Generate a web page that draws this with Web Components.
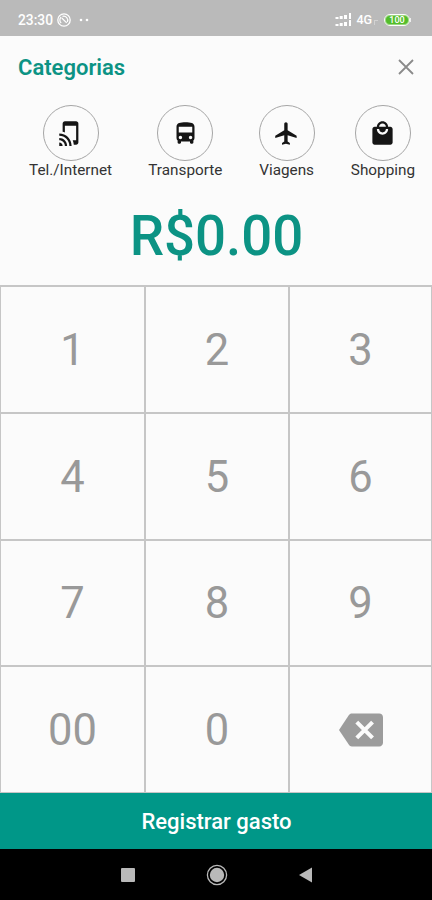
<!DOCTYPE html>
<html lang="pt-BR">
<head>
<meta charset="UTF-8">
<meta name="viewport" content="width=device-width, initial-scale=1.0">
<title>Registrar gasto</title>
<style>
    html, body {
        margin: 0;
        height: 100%;
        background: #fbfbfb;
        font-family: Roboto, "Liberation Sans", sans-serif;
    }
</style>
</head>
<body>
<expense-app></expense-app>

<script>
class BaseElement extends HTMLElement {
    constructor() {
        super();
        const template = document.createElement('template');
        template.innerHTML = this.render();
        this.attachShadow({ mode: 'open' }).appendChild(template.content.cloneNode(true));
    }
}

class StatusBar extends BaseElement {
    render() {
        return `
            <style>
                :host {
                    display: flex;
                    align-items: center;
                    height: 36px;
                    box-sizing: border-box;
                    padding: 3px 21px 0 18px;
                    background: #bababa;
                    color: #fff;
                    font-size: 13.8px;
                    font-weight: 500;
                }
                .clock { width: 36px; }
                .sync { margin-left: 3px; }
                .dots { margin-left: 7px; }
                .signal { margin-left: auto; }
                .net { margin-left: 4px; font-size: 12.5px; }
                .sub { margin: 5px 6px 0 2px; width: 3px; height: 4px; border-left: 1px solid #d2d2d2; border-top: 1px solid #d2d2d2; }
                .battery {
                    box-sizing: border-box;
                    width: 26px;
                    height: 12px;
                    border: 1px solid #fff;
                    border-radius: 6px;
                    background: #53bd2b;
                    box-shadow: inset 0 0 0 1px #9bd781;
                    font-size: 9px;
                    line-height: 10px;
                    text-align: center;
                }
                .tip { width: 1px; height: 4px; background: #eee; }
            </style>
            <span class="clock">23:30</span>
            <svg class="sync" width="14" height="14" viewBox="0 0 14 14" fill="none" stroke="#fff">
                <circle cx="7" cy="7" r="6.2" stroke-width="1.3"/>
                <path d="M4.2 10a4 4 0 0 1 0-6M5.5 3.4a4 4 0 0 1 4.8 5.6M4.8 5l4.9 4.9" stroke-width="1.2"/>
            </svg>
            <svg class="dots" width="12" height="4" viewBox="0 0 12 4" fill="#fff">
                <circle cx="3" cy="2" r="1.3"/><circle cx="9" cy="2" r="1.3"/>
            </svg>
            <svg class="signal" width="17" height="14" viewBox="0 0 17 14" fill="#fff">
                <path d="M0.5 4h3v2h-3zM4.7 3h3v3h-3zM9 2h3v4H9zM14 0h2v6h-2zM0.5 11h3v2h-3zM4.7 10h3v3h-3zM9 9h3v4H9zM14 7h2v6h-2z"/>
            </svg>
            <span class="net">4G</span>
            <span class="sub"></span>
            <span class="battery">100</span>
            <span class="tip"></span>
        `;
    }
}

class AppHeader extends BaseElement {
    render() {
        return `
            <style>
                :host {
                    display: flex;
                    align-items: center;
                    justify-content: space-between;
                    height: 64px;
                    padding: 0 18px;
                }
                h1 {
                    margin: 0;
                    color: #0c9384;
                    font-size: 22px;
                    font-weight: 600;
                    line-height: 26px;
                }
                button { display: flex; padding: 0 0 2px; border: none; background: none; }
            </style>
            <h1><slot></slot></h1>
            <button aria-label="Fechar">
                <svg width="16" height="16" viewBox="0 0 16 16" stroke="#8a8a8a" stroke-width="1.8">
                    <path d="M1 1l14 14M15 1L1 15"/>
                </svg>
            </button>
        `;
    }
}

class CategoryItem extends BaseElement {
    static icons = {
        phone: 'M2 16v2c2.76 0 5 2.24 5 5h2c0-3.87-3.13-7-7-7zm0 4v3h3c0-1.66-1.34-3-3-3zm0-8v2c4.97 0 9 4.03 9 9h2c0-6.08-4.92-11-11-11zM17 1.01L7 1c-1.1 0-2 .9-2 2v7.37c.69.16 1.36.37 2 .64V5h10v13h-3.03c.52 1.25.84 2.59.95 4H17c1.1 0 2-.9 2-2V3c0-1.1-.9-1.99-2-1.99z',
        bus: 'M4 16c0 .88.39 1.67 1 2.22V20c0 .55.45 1 1 1h1c.55 0 1-.45 1-1v-1h8v1c0 .55.45 1 1 1h1c.55 0 1-.45 1-1v-1.78c.61-.55 1-1.34 1-2.22V6c0-3.5-3.58-4-8-4s-8 .5-8 4v10zm3.5 1c-.83 0-1.5-.67-1.5-1.5S6.67 14 7.5 14s1.5.67 1.5 1.5S8.33 17 7.5 17zm9 0c-.83 0-1.5-.67-1.5-1.5s.67-1.5 1.5-1.5 1.5.67 1.5 1.5-.67 1.5-1.5 1.5zm1.5-6H6V6h12v5z',
        flight: 'M21 16v-2l-8-5V3.5c0-.83-.67-1.5-1.5-1.5S10 2.67 10 3.5V9l-8 5v2l8-2.5V19l-2 1.5V22l3.5-1 3.5 1v-1.5L13 19v-5.5l8 2.5z',
        mall: 'M19 6h-2c0-2.76-2.24-5-5-5S7 3.24 7 6H5c-1.1 0-1.99.9-1.99 2L3 20c0 1.1.9 2 2 2h14c1.1 0 2-.9 2-2V8c0-1.1-.9-2-2-2zm-7-3c1.66 0 3 1.34 3 3H9c0-1.66 1.34-3 3-3zm0 10c-2.76 0-5-2.24-5-5h2c0 1.66 1.34 3 3 3s3-1.34 3-3h2c0 2.76-2.24 5-5 5z'
    };

    render() {
        return `
            <style>
                :host {
                    display: flex;
                    flex-direction: column;
                    align-items: center;
                    flex: none;
                    color: #333;
                    font-size: 15.3px;
                    line-height: 18px;
                    white-space: nowrap;
                }
                .circle {
                    display: flex;
                    align-items: center;
                    justify-content: center;
                    box-sizing: border-box;
                    width: 56px;
                    height: 56px;
                    border: 1px solid #a6a6a6;
                    border-radius: 50%;
                }
            </style>
            <div class="circle">
                <svg width="27" height="27" viewBox="0 0 24 24" fill="#151515"><path/></svg>
            </div>
            <slot></slot>
        `;
    }

    connectedCallback() {
        this.shadowRoot.querySelector('path').setAttribute('d', CategoryItem.icons[this.getAttribute('icon')]);
    }
}

class AmountDisplay extends BaseElement {
    render() {
        return `
            <style>
                :host {
                    display: flex;
                    align-items: center;
                    justify-content: center;
                    height: 100px;
                    box-sizing: border-box;
                    padding: 2px 0 0 1px;
                    color: #0c9384;
                    font-size: 54.6px;
                    font-weight: 500;
                }
            </style>
            <slot></slot>
        `;
    }
}

class KeyPad extends BaseElement {
    render() {
        return `
            <style>
                :host {
                    display: grid;
                    grid-template-columns: 143px 142px 141px;
                    grid-template-rows: repeat(4, 1fr);
                    gap: 2px;
                    padding: 2px 1px 1px 1px;
                    box-sizing: border-box;
                    background: #c6c6c6;
                }
            </style>
            <slot></slot>
        `;
    }
}

class PadKey extends BaseElement {
    render() {
        return `
            <style>
                :host {
                    display: flex;
                    align-items: center;
                    justify-content: center;
                    padding-top: 3px;
                    background: #fbfbfb;
                    color: #999;
                    font-size: 43.5px;
                    line-height: 52px;
                }
            </style>
            <slot></slot>
        `;
    }
}

class BackspaceIcon extends BaseElement {
    render() {
        return `
            <style>:host { display: flex; padding-bottom: 3px; }</style>
            <svg width="44" height="44" viewBox="0 0 24 24" fill="#9c9c9c">
                <path d="M22 3H7c-.69 0-1.23.35-1.59.88L0 12l5.41 8.11c.36.53.9.89 1.59.89h15c1.1 0 2-.9 2-2V5c0-1.1-.9-2-2-2z"/>
                <path d="M9.7 7.7l8.6 8.6M18.3 7.7l-8.6 8.6" stroke="#fbfbfb" stroke-width="2.2"/>
            </svg>
        `;
    }
}

class SubmitButton extends BaseElement {
    render() {
        return `
            <style>
                :host { display: flex; height: 56px; }
                button {
                    flex: 1;
                    padding: 1px 0 0 1px;
                    border: none;
                    background: #009788;
                    color: #fff;
                    font: 500 22px Roboto, "Liberation Sans", sans-serif;
                }
            </style>
            <button><slot></slot></button>
        `;
    }
}

class NavBar extends BaseElement {
    render() {
        return `
            <style>
                :host {
                    display: flex;
                    align-items: center;
                    justify-content: center;
                    gap: 71px;
                    height: 51px;
                    box-sizing: border-box;
                    padding-left: 1px;
                    background: #000;
                }
            </style>
            <svg width="14" height="14"><rect width="14" height="14" rx="1" fill="#b9b9b9"/></svg>
            <svg width="22" height="22" viewBox="0 0 22 22">
                <circle cx="11" cy="11" r="9.6" fill="none" stroke="#b9b9b9" stroke-width="1.3"/>
                <circle cx="11" cy="11" r="7.2" fill="#b9b9b9"/>
            </svg>
            <svg width="14" height="16" viewBox="0 0 14 16"><path d="M0 8L13 0.5v15z" fill="#b9b9b9"/></svg>
        `;
    }
}

class ExpenseApp extends BaseElement {
    render() {
        return `
            <style>
                :host {
                    display: flex;
                    flex-direction: column;
                    width: 432px;
                    height: 900px;
                    overflow: hidden;
                }
                .categories {
                    display: flex;
                    justify-content: space-between;
                    height: 80px;
                    padding: 5px 17px 0 29px;
                }
                key-pad { flex: 1; }
            </style>
            <status-bar></status-bar>
            <app-header>Categorias</app-header>
            <div class="categories">
                <category-item icon="phone">Tel./Internet</category-item>
                <category-item icon="bus">Transporte</category-item>
                <category-item icon="flight">Viagens</category-item>
                <category-item icon="mall">Shopping</category-item>
            </div>
            <amount-display>R$0.00</amount-display>
            <key-pad>
                <pad-key>1</pad-key>
                <pad-key>2</pad-key>
                <pad-key>3</pad-key>
                <pad-key>4</pad-key>
                <pad-key>5</pad-key>
                <pad-key>6</pad-key>
                <pad-key>7</pad-key>
                <pad-key>8</pad-key>
                <pad-key>9</pad-key>
                <pad-key>00</pad-key>
                <pad-key>0</pad-key>
                <pad-key><backspace-icon></backspace-icon></pad-key>
            </key-pad>
            <submit-button>Registrar gasto</submit-button>
            <nav-bar></nav-bar>
        `;
    }
}

customElements.define('status-bar', StatusBar);
customElements.define('app-header', AppHeader);
customElements.define('category-item', CategoryItem);
customElements.define('amount-display', AmountDisplay);
customElements.define('key-pad', KeyPad);
customElements.define('pad-key', PadKey);
customElements.define('backspace-icon', BackspaceIcon);
customElements.define('submit-button', SubmitButton);
customElements.define('nav-bar', NavBar);
customElements.define('expense-app', ExpenseApp);
</script>
</body>
</html>
